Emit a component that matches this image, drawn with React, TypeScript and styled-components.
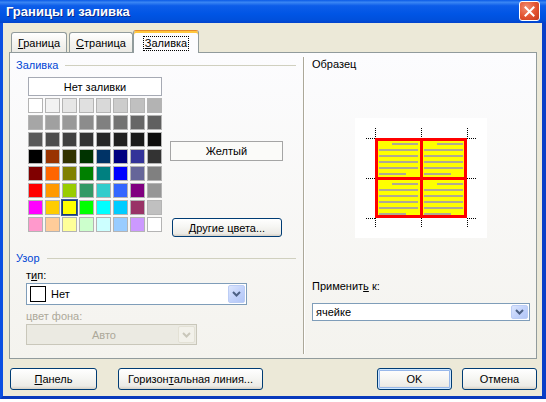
import React from "react";
import styled, { createGlobalStyle, css } from "styled-components";

const FONT = `Tahoma, "Liberation Sans", Arial, sans-serif`;

const GlobalStyle = createGlobalStyle`
  html, body { margin: 0; padding: 0; background: #ffffff; }
  body { font-family: ${FONT}; font-size: 11px; color: #000; }
  #root { width: 546px; height: 402px; overflow: hidden; }
  u { text-decoration: underline; text-underline-offset: 1px; }
`;

const PALETTE = [
  "#FFFFFF", "#F2F2F2", "#E6E6E6", "#E0E0E0", "#D9D9D9", "#CCCCCC", "#C0C0C0", "#B3B3B3",
  "#A6A6A6", "#A0A0A0", "#999999", "#8C8C8C", "#808080", "#737373", "#666666", "#606060",
  "#595959", "#4D4D4D", "#404040", "#333333", "#262626", "#202020", "#1A1A1A", "#0D0D0D",
  "#000000", "#993300", "#333300", "#003300", "#003366", "#000080", "#333399", "#333333",
  "#800000", "#FF6600", "#808000", "#008000", "#008080", "#0000FF", "#666699", "#808080",
  "#FF0000", "#FF9900", "#99CC00", "#339966", "#33CCCC", "#3366FF", "#800080", "#969696",
  "#FF00FF", "#FFCC00", "#FFFF00", "#00FF00", "#00FFFF", "#00CCFF", "#993366", "#C0C0C0",
  "#FF99CC", "#FFCC99", "#FFFF99", "#CCFFCC", "#CCFFFF", "#99CCFF", "#CC99FF", "#FFFFFF",
];
const SELECTED = 50;

const Window = styled.div`
  width: 546px;
  display: flex;
  flex-direction: column;
  font-family: ${FONT};
  font-size: 11px;
`;

const TitleBar = styled.div`
  height: 23px;
  box-sizing: border-box;
  display: flex;
  align-items: flex-start;
  justify-content: space-between;
  padding: 0 6px 0 6px;
  background: linear-gradient(180deg, #0a5ae6 0%, #3a86f4 10%, #0d5de9 25%, #0055e5 60%, #0050dc 85%, #0343cc 100%);
`;

const Title = styled.div`
  margin-top: 4px;
  color: #ffffff;
  font-family: "Liberation Sans", Arial, sans-serif;
  font-weight: bold;
  font-size: 13px;
  line-height: 15px;
  text-shadow: 1px 1px 0 #0a2a8a;
`;

const CloseButton = styled.div`
  margin-top: 1px;
  width: 21px;
  height: 20px;
  box-sizing: border-box;
  border: 1px solid #ffffff;
  border-radius: 3px;
  background: radial-gradient(circle at 35% 30%, #f28d72 0%, #e2522f 55%, #c4381c 100%);
  display: flex;
  align-items: center;
  justify-content: center;
`;

const Frame = styled.div`
  height: 376px;
  box-sizing: border-box;
  background: #ece9d8;
  border-left: 3px solid #0b4fe2;
  border-right: 4px solid #0a3fc8;
  border-bottom: 3px solid #0839bc;
  padding: 7px 5px 0 6px;
  display: flex;
  flex-direction: column;
`;

const TabStrip = styled.div`
  height: 22px;
  display: flex;
  align-items: flex-end;
  padding-left: 2px;
  position: relative;
  z-index: 1;
`;

const Tab = styled.div<{ $active?: boolean; $w: number }>`
  width: ${(p) => p.$w}px;
  height: 20px;
  box-sizing: border-box;
  border: 1px solid #919b9c;
  border-bottom: none;
  border-radius: 3px 3px 0 0;
  background: linear-gradient(180deg, #ffffff 0%, #f5f4f0 50%, #ecebe6 100%);
  display: flex;
  align-items: center;
  justify-content: center;
  margin-right: 2px;
  ${(p) =>
    p.$active &&
    css`
      height: 23px;
      margin: 0 0 -1px -2px;
      border-top: 1px solid #e68b2c;
      box-shadow: inset 0 2px 0 #ffc73c;
      background: #fcfcfe;
      padding-top: 2px;
    `}
`;

const FocusText = styled.span`
  outline: 1px dotted #000;
  outline-offset: 0px;
  padding: 0 1px;
  line-height: 13px;
`;

const Panel = styled.div`
  height: 307px;
  box-sizing: border-box;
  border: 1px solid #919b9c;
  background: linear-gradient(180deg, #fcfcfe 0%, #f4f3ee 100%);
  display: grid;
  grid-template-columns: 293px 2px 1fr;
`;

const Divider = styled.div`
  margin: 4px 0 4px;
  border-left: 1px solid #aca899;
  border-right: 1px solid #ffffff;
`;

const LeftCol = styled.div`
  display: flex;
  flex-direction: column;
  padding: 0 7px 0 6px;
`;

const RightCol = styled.div`
  display: flex;
  flex-direction: column;
  padding: 0 6px 0 7px;
`;

const GroupHeader = styled.div<{ $top: number }>`
  margin-top: ${(p) => p.$top}px;
  height: 13px;
  line-height: 13px;
  color: #0046d5;
  display: flex;
  align-items: center;
  gap: 7px;
  &::after {
    content: "";
    flex: 1;
    height: 1px;
    background: #d0d0bf;
  }
`;

const FillBody = styled.div`
  display: flex;
  margin-top: 5px;
  padding-left: 12px;
`;

const PaletteCol = styled.div`
  width: 134px;
  display: flex;
  flex-direction: column;
`;

const NoFillButton = styled.div`
  height: 19px;
  box-sizing: border-box;
  border: 1px solid #a6aab4;
  background: #ffffff;
  display: flex;
  align-items: center;
  justify-content: center;
`;

const SwatchGrid = styled.div`
  margin-top: 2px;
  display: grid;
  grid-template-columns: repeat(8, 15px);
  grid-auto-rows: 15px;
  gap: 2px;
`;

const Swatch = styled.div<{ $color: string; $selected?: boolean }>`
  box-sizing: border-box;
  border: 1px solid #b4b4b4;
  background: ${(p) => p.$color};
  ${(p) =>
    p.$selected &&
    css`
      border: 1px solid #1c3a78;
      outline: 1px solid #3d5c9c;
    `}
`;

const SideCol = styled.div`
  margin-left: 8px;
  display: flex;
  flex-direction: column;
`;

const ColorName = styled.div`
  margin-top: 64px;
  width: 113px;
  height: 20px;
  box-sizing: border-box;
  border: 1px solid #a5a5a5;
  background: #fbfbf9;
  display: flex;
  align-items: center;
  justify-content: center;
`;

const XPButton = styled.div<{ $w: number; $h?: number; $default?: boolean; $ml?: number }>`
  width: ${(p) => p.$w}px;
  height: ${(p) => p.$h ?? 22}px;
  margin-left: ${(p) => p.$ml ?? 0}px;
  box-sizing: border-box;
  border: 1px solid #003c74;
  border-radius: 3px;
  background: linear-gradient(180deg, #ffffff 0%, #f6f6f3 45%, #ecebe6 85%, #d6d0c5 100%);
  display: flex;
  align-items: center;
  justify-content: center;
  ${(p) =>
    p.$default &&
    css`
      box-shadow: inset 0 0 0 1px #cee7ff, inset 0 0 0 2px #98b8ea;
    `}
`;

const MoreButton = styled(XPButton)`
  margin: 57px 0 0 2px;
`;

const FieldLabel = styled.div<{ $top: number; $disabled?: boolean }>`
  margin: ${(p) => p.$top}px 0 0 10px;
  height: 13px;
  line-height: 13px;
  color: ${(p) => (p.$disabled ? "#aca899" : "#000")};
`;

const PlainLabel = styled.div<{ $top: number }>`
  margin-top: ${(p) => p.$top}px;
  height: 13px;
  line-height: 13px;
`;

const Combo = styled.div<{ $w?: number; $h: number; $top: number; $left?: number; $disabled?: boolean }>`
  margin: ${(p) => p.$top}px 0 0 ${(p) => p.$left ?? 0}px;
  ${(p) => (p.$w ? `width: ${p.$w}px;` : "")}
  height: ${(p) => p.$h}px;
  box-sizing: border-box;
  border: 1px solid ${(p) => (p.$disabled ? "#c9c7ba" : "#7f9db9")};
  background: ${(p) => (p.$disabled ? "#ebeae2" : "#ffffff")};
  display: flex;
  align-items: stretch;
  padding: 1px;
`;

const ComboValue = styled.div<{ $center?: boolean; $disabled?: boolean }>`
  flex: 1;
  display: flex;
  align-items: center;
  gap: 5px;
  padding-left: 2px;
  justify-content: ${(p) => (p.$center ? "center" : "flex-start")};
  color: ${(p) => (p.$disabled ? "#aca899" : "#000")};
`;

const ComboSwatch = styled.span`
  width: 16px;
  height: 16px;
  box-sizing: border-box;
  border: 1px solid #000;
  background: #fff;
`;

const ComboArrow = styled.div<{ $disabled?: boolean }>`
  width: 17px;
  box-sizing: border-box;
  border-radius: 2px;
  border: 1px solid ${(p) => (p.$disabled ? "#e3e1d5" : "#bccdf5")};
  background: ${(p) =>
    p.$disabled
      ? "#f2f1ea"
      : "linear-gradient(135deg, #dce6fd 0%, #c3d3fb 50%, #b2c6f6 100%)"};
  display: flex;
  align-items: center;
  justify-content: center;
`;

const PreviewBox = styled.div`
  margin-top: 47px;
  align-self: center;
  width: 132px;
  height: 120px;
  background: #ffffff;
`;

const ButtonRow = styled.div`
  margin-top: 9px;
  height: 22px;
  display: flex;
  align-items: center;
`;

const Spacer = styled.div`
  flex: 1;
`;

const BehindStrip = styled.div`
  height: 3px;
  background: #ffffff;
`;

const Chevron = ({ color }: { color: string }) => (
  <svg width="9" height="6" viewBox="0 0 9 6">
    <path d="M1 1 L4.5 4.5 L8 1" fill="none" stroke={color} strokeWidth="2" />
  </svg>
);

const Preview = () => {
  const cells = [
    { x: 24, y: 25 },
    { x: 69, y: 25 },
    { x: 24, y: 65 },
    { x: 69, y: 65 },
  ];
  const marksX = [20, 66, 112];
  const marksY = [20, 60, 100];
  return (
    <svg width="132" height="120" viewBox="0 0 132 120">
      <g stroke="#000" strokeWidth="1" strokeDasharray="1 1" shapeRendering="crispEdges">
        {marksX.map((x) => (
          <React.Fragment key={"v" + x}>
            <line x1={x + 0.5} y1={10} x2={x + 0.5} y2={20} />
            <line x1={x + 0.5} y1={100} x2={x + 0.5} y2={110} />
          </React.Fragment>
        ))}
        {marksY.map((y) => (
          <React.Fragment key={"h" + y}>
            <line x1={11} y1={y + 0.5} x2={21} y2={y + 0.5} />
            <line x1={112} y1={y + 0.5} x2={122} y2={y + 0.5} />
          </React.Fragment>
        ))}
      </g>
      <rect x="20" y="20" width="92" height="80" fill="#ffff00" />
      <g fill="#b0aa92">
        {cells.map((c, i) => (
          <React.Fragment key={i}>
            <rect x={c.x + 13} y={c.y} width={26} height={2} />
            <rect x={c.x} y={c.y + 6} width={39} height={2} />
            <rect x={c.x} y={c.y + 12} width={39} height={2} />
            <rect x={c.x} y={c.y + 18} width={39} height={2} />
            <rect x={c.x} y={c.y + 24} width={39} height={2} />
            <rect x={c.x} y={c.y + 30} width={27} height={2} />
          </React.Fragment>
        ))}
      </g>
      <g fill="none" stroke="#ff0000" strokeWidth="3" shapeRendering="crispEdges">
        <rect x="21.5" y="21.5" width="89" height="77" />
        <line x1="66.5" y1="20" x2="66.5" y2="100" />
        <line x1="20" y1="60.5" x2="112" y2="60.5" />
      </g>
    </svg>
  );
};

const BehindTicks = () => (
  <svg width="546" height="3" viewBox="0 0 546 3">
    <g stroke="#000" strokeWidth="1" shapeRendering="crispEdges">
      {[192, 240, 254, 272, 289, 322, 369].map((x) => (
        <line key={x} x1={x + 0.5} y1={0} x2={x + 0.5} y2={3} />
      ))}
    </g>
    <rect x="388" y="0" width="12" height="3" fill="#6b8fd6" />
  </svg>
);

export default function App() {
  return (
    <>
      <GlobalStyle />
      <Window>
        <TitleBar>
          <Title>Границы и заливка</Title>
          <CloseButton>
            <svg width="11" height="11" viewBox="0 0 11 11">
              <path d="M1.5 1.5 L9.5 9.5 M9.5 1.5 L1.5 9.5" stroke="#fff" strokeWidth="2" strokeLinecap="square" />
            </svg>
          </CloseButton>
        </TitleBar>
        <Frame>
          <TabStrip>
            <Tab $w={56}>
              <span>
                <u>Г</u>раница
              </span>
            </Tab>
            <Tab $w={64}>
              <span>
                <u>С</u>траница
              </span>
            </Tab>
            <Tab $w={66} $active>
              <FocusText>
                <u>З</u>аливка
              </FocusText>
            </Tab>
          </TabStrip>
          <Panel>
            <LeftCol>
              <GroupHeader $top={6}>Заливка</GroupHeader>
              <FillBody>
                <PaletteCol>
                  <NoFillButton>Нет заливки</NoFillButton>
                  <SwatchGrid>
                    {PALETTE.map((c, i) => (
                      <Swatch key={i} $color={c} $selected={i === SELECTED} />
                    ))}
                  </SwatchGrid>
                </PaletteCol>
                <SideCol>
                  <ColorName>Желтый</ColorName>
                  <MoreButton $w={110} $h={19}>
                    <span>
                      <u>Д</u>ругие цвета...
                    </span>
                  </MoreButton>
                </SideCol>
              </FillBody>
              <GroupHeader $top={15}>Узор</GroupHeader>
              <FieldLabel $top={4}>
                т<u>и</u>п:
              </FieldLabel>
              <Combo $w={221} $h={22} $top={1} $left={10}>
                <ComboValue>
                  <ComboSwatch />
                  Нет
                </ComboValue>
                <ComboArrow>
                  <Chevron color="#4d6185" />
                </ComboArrow>
              </Combo>
              <FieldLabel $top={5} $disabled>
                цвет фона:
              </FieldLabel>
              <Combo $w={171} $h={21} $top={1} $left={10} $disabled>
                <ComboValue $center $disabled>
                  Авто
                </ComboValue>
                <ComboArrow $disabled>
                  <Chevron color="#c9c7ba" />
                </ComboArrow>
              </Combo>
            </LeftCol>
            <Divider />
            <RightCol>
              <PlainLabel $top={5}>Образец</PlainLabel>
              <PreviewBox>
                <Preview />
              </PreviewBox>
              <PlainLabel $top={42}>
                Применит<u>ь</u> к:
              </PlainLabel>
              <Combo $h={18} $top={10}>
                <ComboValue>ячейке</ComboValue>
                <ComboArrow>
                  <Chevron color="#4d6185" />
                </ComboArrow>
              </Combo>
            </RightCol>
          </Panel>
          <ButtonRow>
            <XPButton $w={87} $ml={1}>
              <span>
                <u>П</u>анель
              </span>
            </XPButton>
            <XPButton $w={145} $ml={21}>
              <span>
                Горизон<u>т</u>альная линия...
              </span>
            </XPButton>
            <Spacer />
            <XPButton $w={75} $default>
              OK
            </XPButton>
            <XPButton $w={75} $ml={10}>
              Отмена
            </XPButton>
          </ButtonRow>
        </Frame>
        <BehindStrip>
          <BehindTicks />
        </BehindStrip>
      </Window>
    </>
  );
}
